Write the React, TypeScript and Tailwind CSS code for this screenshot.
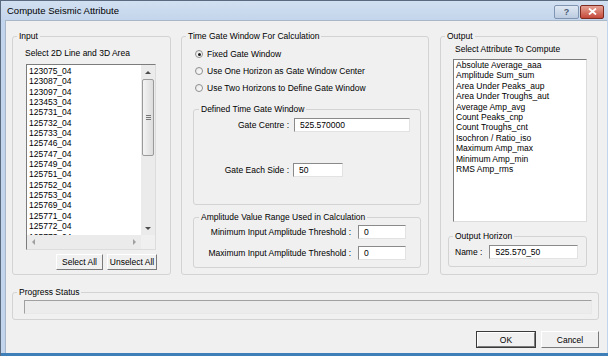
import React from "react";

const lines = [
  "123075_04","123087_04","123097_04","123453_04","125731_04","125732_04","125733_04","125746_04","125747_04","125749_04","125751_04","125752_04","125753_04","125769_04","125771_04","125772_04","125773_04",
];
const attrs = [
  "Absolute Average_aaa","Amplitude Sum_sum","Area Under Peaks_aup","Area Under Troughs_aut","Average Amp_avg","Count Peaks_cnp","Count Troughs_cnt","Isochron / Ratio_iso","Maximum Amp_max","Minimum Amp_min","RMS Amp_rms",
];

function Radio({ checked, label }: { checked?: boolean; label: string }) {
  return (
    <div className="flex items-center h-[10px]">
      <div className="w-[8px] h-[8px] rounded-full border border-[#8e8f8f] bg-gradient-to-br from-[#e6e6e6] to-white flex items-center justify-center">
        {checked && <div className="w-[3px] h-[3px] rounded-full bg-[#1a1a1a]" />}
      </div>
      <span className="ml-[4px]">{label}</span>
    </div>
  );
}

function Input({ value, w }: { value: string; w: string }) {
  return (
    <div className={`${w} h-[14px] bg-white border border-t-[#8a8a8a] border-l-[#8a8a8a] border-b-[#e2e2e2] border-r-[#e2e2e2] pl-[5px] flex items-center`}>
      {value}
    </div>
  );
}

function Btn({ label, w, def }: { label: string; w: string; def?: boolean }) {
  return (
    <div className={`${w} ${def ? "border border-[#3a3a3a]" : ""} bg-[#f0f0f0]`}>
      <div className="h-full border border-t-white border-l-white border-b-[#7a7a7a] border-r-[#7a7a7a] flex items-center justify-center">
        {label}
      </div>
    </div>
  );
}

function Arrow({ dir }: { dir: "up" | "down" | "left" | "right" }) {
  const pts = {
    up: "0,3 3,0 6,3",
    down: "0,0 3,3 6,0",
    left: "3,0 0,3 3,6",
    right: "0,0 3,3 0,6",
  }[dir];
  const vb = dir === "up" || dir === "down" ? "0 0 6 3" : "0 0 3 6";
  const cls = dir === "up" || dir === "down" ? "w-[6px] h-[3px]" : "w-[3px] h-[6px]";
  return (
    <svg viewBox={vb} className={cls}>
      <polygon points={pts} fill={dir === "up" || dir === "down" ? "#4d4d4d" : "#a0a0a0"} />
    </svg>
  );
}

export default function App() {
  return (
    <div className="w-[608px] h-[356px] overflow-hidden font-['Liberation_Sans',Arial,sans-serif] text-[8.5px] leading-[10px] text-black bg-[#c3d5ec] border-l border-t border-[#5a6b80] flex flex-col">
      {/* title bar */}
      <div className="h-[19px] flex items-center bg-gradient-to-b from-[#d2e0f1] to-[#c3d5ec] pl-[6px] pr-[4px]">
        <span className="text-[9.5px] pt-[1px]">Compute Seismic Attribute</span>
        <div className="ml-auto flex items-center gap-[1px] mt-[2px]">
          <div className="w-[25px] h-[14px] rounded-[2px] border border-[#8095b1] bg-gradient-to-b from-[#dfe8f3] to-[#bccbe0] flex items-center justify-center text-[9px] leading-[10px] text-[#4a5b73] font-bold">?</div>
          <div className="w-[24px] h-[14px] rounded-[2px] border border-[#7d2a21] bg-gradient-to-b from-[#e5a296] to-[#c4493a] flex items-center justify-center">
            <svg viewBox="0 0 9 7" className="w-[9px] h-[7px]">
              <path d="M1 0.5 L8 6.5 M8 0.5 L1 6.5" stroke="white" strokeWidth="1.8" />
            </svg>
          </div>
        </div>
      </div>
      {/* client */}
      <div className="ml-[4px] mr-[1px] h-[333px] bg-[#f0f0f0] border-t border-l border-[#a9b8c9] flex flex-col">
        <div className="flex mt-[10px] ml-[6px]">
          {/* Input */}
          <fieldset className="w-[159px] h-[244px] border border-[#d3d3d3] rounded-[3px]">
            <legend className="ml-[4px] px-[2px]">Input</legend>
            <div className="ml-[12px] mt-[7px]">Select 2D Line and 3D Area</div>
            <div className="ml-[13px] mt-[6px] w-[130px] h-[186px] bg-white border border-t-[#7c7c7c] border-l-[#7c7c7c] border-b-[#dcdcdc] border-r-[#dcdcdc] flex flex-col">
              <div className="flex h-[170px]">
                <div className="flex-1 overflow-hidden pl-[2px] pt-[1px]">
                  {lines.map((l) => (
                    <div key={l} className="leading-[10.35px]">{l}</div>
                  ))}
                </div>
                <div className="w-[14px] bg-[#ebebeb] flex flex-col items-center">
                  <div className="h-[14px] flex items-center justify-center"><Arrow dir="up" /></div>
                  <div className="w-[12px] h-[77px] rounded-[2px] border border-[#9a9a9a] bg-gradient-to-r from-[#f4f4f4] to-[#dcdcdc] flex flex-col items-center justify-center gap-[1px]">
                    <div className="w-[5px] h-[1px] bg-[#777]" />
                    <div className="w-[5px] h-[1px] bg-[#777]" />
                    <div className="w-[5px] h-[1px] bg-[#777]" />
                  </div>
                  <div className="mt-auto h-[14px] flex items-center justify-center"><Arrow dir="down" /></div>
                </div>
              </div>
              <div className="flex h-[14px]">
                <div className="flex-1 bg-[#ebebeb] flex items-center justify-between px-[5px]">
                  <Arrow dir="left" />
                  <Arrow dir="right" />
                </div>
                <div className="w-[14px] bg-[#f0f0f0]" />
              </div>
            </div>
            <div className="flex justify-end gap-[4px] mt-[4px] w-[144px]">
              <Btn label="Select All" w="w-[47px] h-[16px]" />
              <Btn label="Unselect All" w="w-[50px] h-[16px]" />
            </div>
          </fieldset>

          {/* Middle */}
          <fieldset className="ml-[10px] w-[248px] h-[244px] border border-[#d3d3d3] rounded-[3px]">
            <legend className="ml-[4px] px-[2px]">Time Gate Window For Calculation</legend>
            <div className="ml-[13px] mt-[8px] flex flex-col gap-[7px]">
              <Radio checked label="Fixed Gate Window" />
              <Radio label="Use One Horizon as Gate Window Center" />
              <Radio label="Use Two Horizons to Define Gate Window" />
            </div>
            <fieldset className="ml-[11px] mt-[11px] w-[228px] h-[101px] border border-[#d3d3d3] rounded-[3px]">
              <legend className="ml-[5px] px-[2px]">Defined Time Gate Window</legend>
              <div className="mt-[4px] flex items-center">
                <div className="w-[95px] text-right">Gate Centre :</div>
                <div className="ml-[5px]"><Input value="525.570000" w="w-[116px]" /></div>
              </div>
              <div className="mt-[31px] flex items-center">
                <div className="w-[95px] text-right">Gate Each Side :</div>
                <div className="ml-[4px]"><Input value="50" w="w-[50px]" /></div>
              </div>
            </fieldset>
            <fieldset className="ml-[11px] mt-[7px] w-[228px] h-[56px] border border-[#d3d3d3] rounded-[3px]">
              <legend className="ml-[5px] px-[2px]">Amplitude Value Range Used in Calculation</legend>
              <div className="mt-[3px] flex items-center">
                <div className="w-[157px] text-right">Minimum Input Amplitude Threshold :</div>
                <div className="ml-[7px]"><Input value="0" w="w-[48px]" /></div>
              </div>
              <div className="mt-[7px] flex items-center">
                <div className="w-[157px] text-right">Maximum Input Amplitude Threshold :</div>
                <div className="ml-[7px]"><Input value="0" w="w-[48px]" /></div>
              </div>
            </fieldset>
          </fieldset>

          {/* Output */}
          <fieldset className="ml-[11px] w-[158px] h-[244px] border border-[#d3d3d3] rounded-[3px]">
            <legend className="ml-[4px] px-[2px]">Output</legend>
            <div className="ml-[14px] mt-[3px]">Select Attribute To Compute</div>
            <div className="ml-[12px] mt-[5px] w-[134px] h-[163px] bg-white border border-t-[#7c7c7c] border-l-[#7c7c7c] border-b-[#dcdcdc] border-r-[#dcdcdc] pl-[2px] pt-[0px]">
              {attrs.map((a) => (
                <div key={a} className="leading-[10.4px]">{a}</div>
              ))}
            </div>
            <fieldset className="ml-[7px] mt-[9px] w-[139px] h-[36px] border border-[#d3d3d3] rounded-[3px]">
              <legend className="ml-[4px] px-[2px]">Output Horizon</legend>
              <div className="mt-[4px] flex items-center">
                <span className="ml-[6px]">Name :</span>
                <div className="ml-[7px]"><Input value="525.570_50" w="w-[89px]" /></div>
              </div>
            </fieldset>
          </fieldset>
        </div>

        {/* Progress */}
        <fieldset className="ml-[6px] mt-[12px] w-[587px] h-[33px] border border-[#d3d3d3] rounded-[3px]">
          <legend className="ml-[4px] px-[2px]">Progress Status</legend>
          <div className="ml-[11px] mt-[3px] w-[568px] h-[14px] border border-t-[#a0a0a0] border-l-[#a0a0a0] border-b-[#e8e8e8] border-r-[#e8e8e8] bg-[#ececec]" />
        </fieldset>

        {/* Buttons */}
        <div className="flex justify-end gap-[5px] mt-[11px] mr-[8px]">
          <Btn label="OK" w="w-[60px] h-[17px]" def />
          <Btn label="Cancel" w="w-[58px] h-[17px]" />
        </div>
      </div>
      <div className="flex-1 bg-[#3e7fb8]" />
    </div>
  );
}
